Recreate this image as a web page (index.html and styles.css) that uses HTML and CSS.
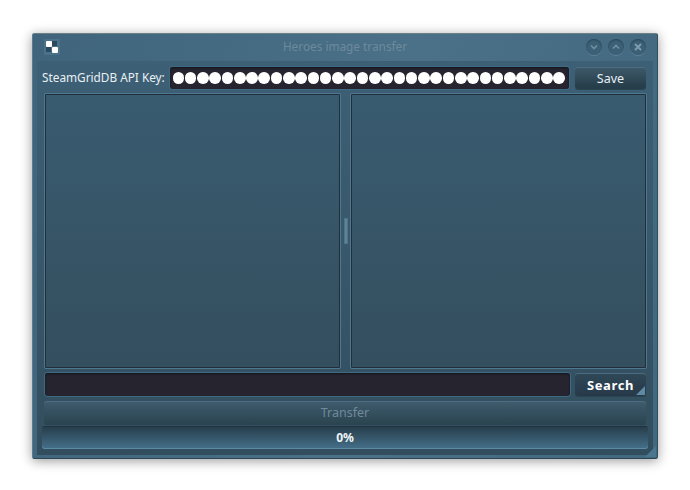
FILE: index.html
```html
<!DOCTYPE html>
<html lang="en">
<head>
    <meta charset="UTF-8">
    <title>Heroes image transfer</title>
    <link rel="stylesheet" href="styles.css">
</head>
<body>
    <div class="window">
        <div class="titlebar">
            <svg class="app-icon" width="16" height="16" viewBox="0 0 16 16">
                <rect x="0" y="0" width="16" height="16" fill="#4a7189"/>
                <rect x="2" y="8" width="5" height="5" fill="#2b4a5f"/>
                <rect x="8" y="2" width="5" height="5" fill="#2b4a5f"/>
                <rect x="2" y="2" width="6" height="6" rx="1" fill="#fff"/>
                <rect x="8" y="8" width="6" height="6" rx="1" fill="#fff"/>
            </svg>
            <div class="title">Heroes image transfer</div>
            <div class="wm-buttons">
                <span class="wm-btn"><svg width="16" height="16" viewBox="0 0 16 16"><path d="M5 6.5l3 3 3-3" fill="none" stroke="#6f90a5" stroke-width="1.6"/></svg></span>
                <span class="wm-btn"><svg width="16" height="16" viewBox="0 0 16 16"><path d="M5 9.5l3-3 3 3" fill="none" stroke="#6f90a5" stroke-width="1.6"/></svg></span>
                <span class="wm-btn"><svg width="16" height="16" viewBox="0 0 16 16"><path d="M5 5l6 6M11 5l-6 6" fill="none" stroke="#7f9db0" stroke-width="1.8"/></svg></span>
            </div>
        </div>

        <div class="content">
            <div class="row key-row">
                <label class="key-label">SteamGridDB API Key:</label>
                <div class="field key-field" id="dots"></div>
                <button class="btn save-btn">Save</button>
            </div>

            <div class="panels">
                <div class="panel panel-left"></div>
                <div class="splitter"><span class="handle"></span></div>
                <div class="panel"></div>
            </div>

            <div class="row search-row">
                <div class="field search-field"></div>
                <button class="btn search-btn">Search</button>
            </div>

            <button class="btn transfer-btn">Transfer</button>
            <div class="progress">0%</div>
        </div>
        <span class="size-grip"></span>
    </div>

    <script>
        // password echo, 32 chars
        let dots = document.getElementById("dots");
        for (let i = 0; i < 32; i++) {
            let d = document.createElement("span");
            d.className = "dot";
            dots.appendChild(d);
        }
    </script>
</body>
</html>
```

FILE: styles.css
```css
body {
    margin: 0;
    height: 490px;
    overflow: hidden;
    background: #fff;
    font-family: "Noto Sans", "Open Sans", sans-serif;
    padding: 33px 0 0 32px;
    box-sizing: border-box;
}
.window {
    position: relative;
    width: 626px;
    height: 426px;
    box-sizing: border-box;
    display: flex;
    flex-direction: column;
    background: linear-gradient(100deg, #3f647b 0%, #4a7188 55%, #41687f 100%);
    border-top: 1px solid #6d8087;
    border-left: 1px solid #5a7c90;
    border-right: 1px solid #2f4e60;
    border-bottom: 1px solid #2c4656;
    border-radius: 2px;
    box-shadow: 0 2px 12px rgba(0, 0, 0, 0.4);
}
.titlebar {
    height: 27px;
    flex: none;
    display: flex;
    align-items: center;
    position: relative;
    padding: 0 11px 0 11px;
}
.app-icon {
    flex: none;
    margin-top: -2px;
}
.title {
    position: absolute;
    left: 0;
    right: 0;
    top: 3px;
    text-align: center;
    font-size: 11.8px;
    line-height: 19px;
    color: #6d8a9c;
}
.wm-buttons {
    margin-left: auto;
    display: flex;
    gap: 6px;
    margin-top: -2px;
}
.wm-btn {
    width: 16px;
    height: 16px;
    border-radius: 50%;
    background: #3c6177;
    box-shadow: inset 0 1px 2px #294656, 0 1px 0 #5c8097;
    display: block;
}
.wm-btn svg {
    display: block;
}
.content {
    flex: 1;
    margin: 0 4px 3px 4px;
    padding: 6px 5px 6px 5px;
    display: flex;
    flex-direction: column;
    background: linear-gradient(#3d6076, #324e5e);
    min-height: 0;
}
.row {
    display: flex;
    flex: none;
    align-items: stretch;
}
.key-row {
    height: 22px;
    margin-bottom: 5px;
}
.key-label {
    color: #e8f0f4;
    font-size: 11.8px;
    line-height: 21px;
    width: 128px;
    flex: none;
    white-space: nowrap;
}
.field {
    background: #25242f;
    border-radius: 3px;
    box-shadow: inset 0 1px 2px #14141c, 0 0 0 1px #3f6a84;
    box-sizing: border-box;
}
.key-field {
    width: 399px;
    margin-right: 6px;
    display: flex;
    align-items: center;
    gap: 0.7px;
    padding-left: 2.5px;
}
.dot {
    width: 11.6px;
    height: 11.6px;
    border-radius: 50%;
    background: #fff;
    flex: none;
}
.btn {
    font-family: inherit;
    border: 0;
    border-radius: 3px;
    padding: 0;
    background: linear-gradient(#3e5a6a, #263d4a 90%);
    box-shadow: inset 0 1px 0 #4e6c7f, 0 1px 0 #2a4452;
    color: #e8f0f4;
    box-sizing: border-box;
}
.save-btn {
    width: 71px;
    font-size: 12.5px;
}
.panels {
    flex: 1;
    display: flex;
    min-height: 0;
    margin: 0 2px 0 3px;
}
.panel {
    flex: 1;
    box-sizing: border-box;
    background: linear-gradient(#395b70, #344f5e);
    border: 1px solid #232e3b;
    box-shadow: 0 0 0 1px #4d7890;
    border-radius: 1px;
}
.panel-left {
    flex: none;
    width: 295px;
}
.splitter {
    width: 11px;
    flex: none;
    display: flex;
    align-items: center;
    justify-content: center;
}
.handle {
    width: 2px;
    height: 24px;
    background: #5e8398;
    border: 1px solid #4f7489;
}
.search-row {
    height: 23px;
    margin: 5px 0 5px 3px;
}
.search-field {
    width: 525px;
    margin-right: 5px;
}
.search-btn {
    width: 71px;
    font-size: 13px;
    font-weight: 700;
    letter-spacing: 0.6px;
    position: relative;
    background: linear-gradient(#2f4857, #26394a);
    color: #fff;
}
.search-btn::after {
    content: "";
    position: absolute;
    right: 1px;
    bottom: 1px;
    border-left: 9px solid transparent;
    border-bottom: 9px solid #5f8aa3;
}
.transfer-btn {
    flex: none;
    height: 23px;
    margin: 0 0 3px 2px;
    width: 602px;
    font-size: 12.5px;
    color: #6f8a99;
    background: linear-gradient(#3f5c6e, #2b4450);
}
.progress {
    flex: none;
    height: 22px;
    width: 606px;
    box-sizing: border-box;
    border-radius: 3px;
    background: linear-gradient(#273e4c, #45708a);
    box-shadow: inset 0 -1px 0 #5b8aa5, 0 -1px 0 #22323e;
    color: #f2f6f8;
    font-size: 12px;
    font-weight: 700;
    line-height: 22px;
    text-align: center;
}
.size-grip {
    position: absolute;
    right: 1px;
    bottom: 1px;
    border-left: 11px solid transparent;
    border-bottom: 11px solid #4a7690;
}
```
